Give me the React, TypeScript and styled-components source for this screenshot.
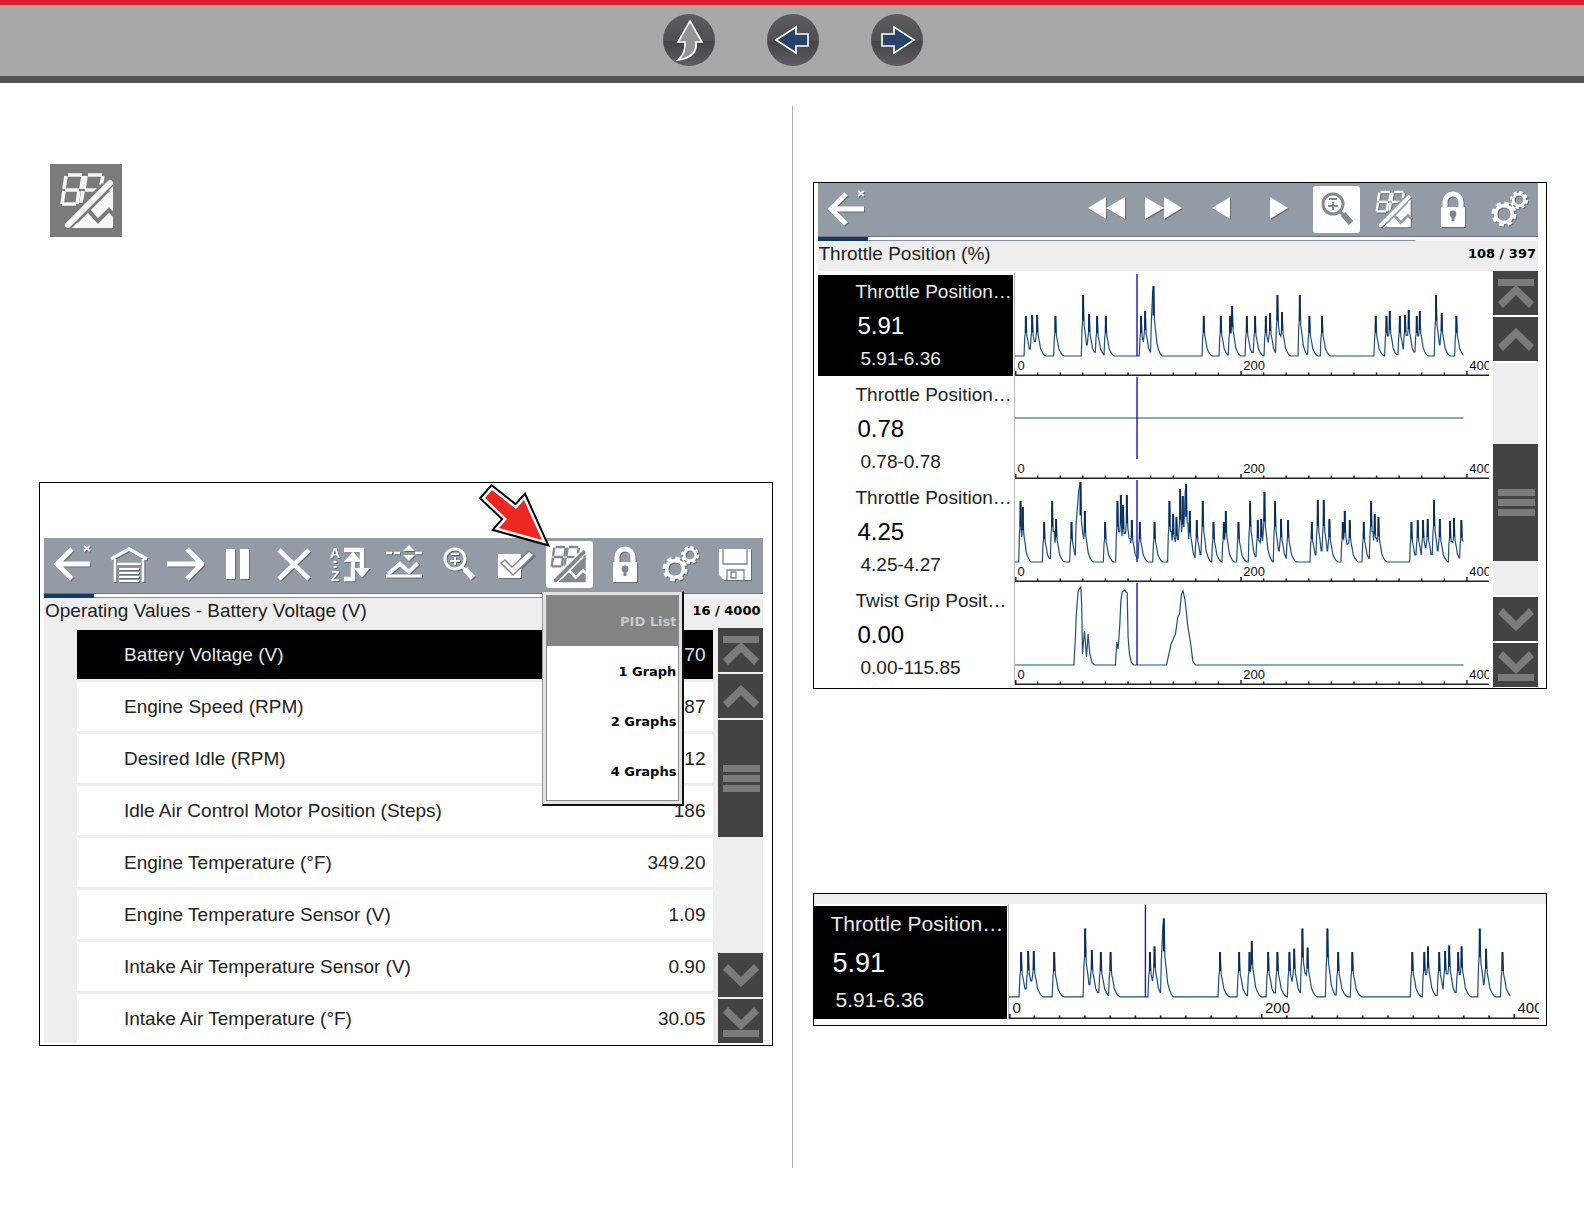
import React from "react";
import styled, { createGlobalStyle, css } from "styled-components";

const GlobalStyle = createGlobalStyle`
  *, *::before, *::after { box-sizing: border-box; }
  body {
    margin: 0;
    background: #fff;
    color: #1c1c1c;
    font-family: "Liberation Sans", Arial, sans-serif;
    font-size: 19px;
  }
  button { font: inherit; color: inherit; border: 0; padding: 0; background: none; cursor: pointer; }
`;

/* ---------- page header ---------- */

const Header = styled.header`
  display: flex;
  justify-content: center;
  align-items: center;
  gap: 52px;
  height: 83px;
  padding: 0 0 1px 1px;
  background: #a8a8a8;
  border-top: 5px solid #d91e2e;
  border-bottom: 7px solid #545454;
`;

const RoundButton = styled.button`
  width: 52px;
  height: 52px;
  border-radius: 50%;
  background: linear-gradient(#5c5c5e, #505052 52%, #434345 52%, #5e5e60);

  svg { display: block; }
`;

function HeaderArrow({ d, fill }: { d: string; fill: string }) {
  return (
    <svg width="52" height="52" viewBox="0 0 52 52" aria-hidden="true">
      <path d={d} fill={fill} stroke="#fff" strokeWidth="1.6" />
    </svg>
  );
}

/* ---------- page columns ---------- */

const Columns = styled.main`
  display: grid;
  grid-template-columns: minmax(0, 1fr) 1px minmax(0, 1fr);
  min-height: 1062px;
  margin: 23px 0 56px;
`;

const LeftColumn = styled.section`
  padding: 58px 19px 0 39px;
`;

const RightColumn = styled.section`
  display: flex;
  flex-direction: column;
  gap: 204px;
  padding: 76px 37px 0 20px;
`;

const Divider = styled.div`
  background: #ababab;
`;

const IconTile = styled.div`
  width: 72px;
  height: 73px;
  margin: 0 0 245px 11px;
  background: #7b7b7b;
  color: #f6f6f6;
`;

const Figure = styled.figure<{ $pad: string }>`
  margin: 0;
  padding: ${(p) => p.$pad};
  border: 1px solid #000;
`;

/* ---------- device screen ---------- */

const Toolbar = styled.div<{ $compact?: boolean }>`
  display: flex;
  align-items: center;
  height: ${(p) => (p.$compact ? 53 : 55)}px;
  padding-bottom: ${(p) => (p.$compact ? 0 : 2)}px;
  background: #929ba6;
`;

const cellWidth = {
  even: css`flex: 1 1 0;`,
  eighth: css`flex: 0 0 8%;`,
};

const ToolCell = styled.div<{ $size: keyof typeof cellWidth; $pushed?: boolean }>`
  ${(p) => cellWidth[p.$size]}
  position: relative;
  display: flex;
  justify-content: center;
  margin-left: ${(p) => (p.$pushed ? "auto" : "0")};
`;

const ToolButton = styled.button<{ $active?: boolean }>`
  display: grid;
  place-items: center;
  width: 47px;
  height: 47px;
  border-radius: 3px;
  background: ${(p) => (p.$active ? "#fff" : "transparent")};
  color: ${(p) => (p.$active ? "#85888c" : "#fff")};

  svg { filter: ${(p) => (p.$active ? "none" : "drop-shadow(1px 1px 0 rgba(70, 75, 85, 0.6))")}; }
`;

const Progress = styled.div`
  display: flex;
  height: 5px;
  border-top: 1px solid #6d7480;
  background: linear-gradient(#fff 75%, #8b8fa0 75%) no-repeat left / 83% 100%, #f6f6f6;

  &::before {
    content: "";
    width: 7%;
    background: #123a63;
  }
`;

const TitleBar = styled.div`
  display: flex;
  justify-content: space-between;
  align-items: flex-start;
  height: 30px;
  padding: 1px 2px 0 1px;
  background: #eee;
  line-height: 24px;
`;

const Title = styled.h2`
  margin: 0;
  font-size: 19px;
  font-weight: 400;
`;

const Counter = styled.span`
  font-family: "DejaVu Sans", Verdana, sans-serif;
  font-size: 13px;
  font-weight: 700;
  color: #000;
`;

const Body = styled.div<{ $bg: string }>`
  display: flex;
  background: ${(p) => p.$bg};
`;

/* ---------- parameter table ---------- */

const ParamTable = styled.table`
  flex: 1;
  margin: 2px 5px 0 33px;
  border-collapse: separate;
  border-spacing: 0;
`;

const ParamRow = styled.tr<{ $selected?: boolean }>`
  height: 52px;
  color: ${(p) => (p.$selected ? "#e8e8e8" : "#222")};

  th, td {
    background: ${(p) => (p.$selected ? "#000" : "#fff")};
    border-bottom: 3px solid #efefef;
  }

  th { padding: 0 0 0 47px; text-align: left; font-weight: 400; }
  td { padding: 0 7px 0 0; text-align: right; }

  &:last-child { height: 49px; }
  &:last-child th, &:last-child td { border-bottom: 0; }
`;

/* ---------- scroll bar ---------- */

const ScrollBar = styled.div`
  display: flex;
  flex-direction: column;
  gap: 2px;
  width: 45px;
`;

const ScrollButton = styled.button`
  height: 44px;
  background: #434343;

  svg { display: block; }
`;

const Track = styled.div`
  flex: 1;
  display: flex;
  flex-direction: column;
  background: #eee;
`;

const TrackSpace = styled.div<{ $grow: number }>`
  flex: ${(p) => p.$grow} 1 0;
`;

const Thumb = styled.div`
  display: flex;
  flex-direction: column;
  justify-content: center;
  align-items: center;
  gap: 3px;
  height: 117px;
  padding-left: 2px;
  background: #434343;

  i { width: 37px; height: 7px; background: #7b7b7b; }
`;

const scrollShapes = {
  "First row": "M5 8h36v7H5zM23 14L41 31l-5 6-13-13-13 13-5-6z",
  "Row up": "M23 11L41 28l-5 6-13-13-13 13-5-6z",
  "Row down": "M23 34L5 17l5-6 13 13 13-13 5 6z",
  "Last row": "M23 31L5 14l5-6 13 13 13-13 5 6zM5 31h36v7H5z",
};

function ScrollStep({ name }: { name: keyof typeof scrollShapes }) {
  return (
    <ScrollButton aria-label={name}>
      <svg width="45" height="44" viewBox="0 0 45 44" aria-hidden="true">
        <path d={scrollShapes[name]} fill="#7b7b7b" />
      </svg>
    </ScrollButton>
  );
}

function Scroller({ before, after }: { before: number; after: number }) {
  return (
    <ScrollBar>
      <ScrollStep name="First row" />
      <ScrollStep name="Row up" />
      <Track>
        <TrackSpace $grow={before} />
        <Thumb><i /><i /><i /></Thumb>
        <TrackSpace $grow={after} />
      </Track>
      <ScrollStep name="Row down" />
      <ScrollStep name="Last row" />
    </ScrollBar>
  );
}

/* ---------- view menu and pointer ---------- */

const Menu = styled.div`
  position: absolute;
  top: 50px;
  left: 1px;
  z-index: 2;
  width: 142px;
  padding: 3px;
  background: #e2e2e2;
  border: 1px solid #9a9a9a;
  border-right: 2px solid #111;
  border-bottom: 2px solid #111;
`;

const MenuList = styled.div`
  padding-bottom: 4px;
  background: #fff;
  border: 1px solid #8a8a8a;
`;

const MenuItem = styled.button<{ $selected?: boolean }>`
  display: block;
  width: 100%;
  height: 50px;
  padding-right: 2px;
  text-align: right;
  font-family: "DejaVu Sans", Verdana, sans-serif;
  font-size: 13px;
  font-weight: 700;
  background: ${(p) => (p.$selected ? "#848484" : "#fff")};
  color: ${(p) => (p.$selected ? "#c9c9c9" : "#000")};
`;

const Pointer = styled.svg`
  position: absolute;
  top: -59px;
  left: -64px;
  z-index: 3;
  overflow: visible;
  pointer-events: none;
`;

const POINTER = "15,8 39,27 47,18 65,58 22,46 30,37 8,16";

/* ---------- icons, all on a 44px square ---------- */

function Icon({ children, box = "0 0 44 44", size = 44 }: { children: React.ReactNode; box?: string; size?: number }) {
  return (
    <svg width={size} height={size} viewBox={box} fill="none" stroke="currentColor" aria-hidden="true">
      {children}
    </svg>
  );
}

const BackIcon = () => (
  <Icon>
    <path d="M22 6L7 21l15 15M8 21h32" strokeWidth="5" />
    <path d="M34 3l6 5M40 3l-6 5" strokeWidth="1.8" />
  </Icon>
);

const GarageIcon = () => (
  <Icon>
    <path d="M6 16L24 6l18 10" strokeWidth="3.6" />
    <path d="M10 16v23M38 16v23M12 21h24" strokeWidth="2.6" />
    <path d="M14 26h20M14 30h20M14 34h20M14 38h20" strokeWidth="2" />
  </Icon>
);

const ForwardIcon = () => (
  <Icon><path d="M27 6l15 15-15 15M7 21h34" strokeWidth="5" /></Icon>
);

const PauseIcon = () => (
  <Icon><path d="M11 6h9v30h-9zM25 6h9v30h-9z" fill="currentColor" stroke="none" /></Icon>
);

const CloseIcon = () => (
  <Icon><path d="M8 7l30 29M38 7L8 36" strokeWidth="4.6" /></Icon>
);

const SortIcon = () => (
  <Icon>
    <text x="4" y="15" fill="currentColor" stroke="none" fontFamily="Liberation Sans, Arial, sans-serif" fontWeight="700" fontSize="14">A</text>
    <text x="5" y="38" fill="currentColor" stroke="none" fontFamily="Liberation Sans, Arial, sans-serif" fontWeight="700" fontSize="14">Z</text>
    <path d="M9 18v2M9 23v2" strokeWidth="3" />
    <path d="M18 7h18v21M18 36h9V16" strokeWidth="4.4" />
    <path d="M30 26l6 7 6-7zM20 18l7-8 7 8z" fill="currentColor" strokeWidth="2" />
  </Icon>
);

const TriggerIcon = () => (
  <Icon>
    <path d="M5 10h6M13 10h6M34 10h7" strokeWidth="2.4" />
    <path d="M22 8h12l-6-6zM22 12h12l-6 6z" fill="currentColor" stroke="none" />
    <path d="M7 31l12-10 9 8 9-9" strokeWidth="4" />
    <path d="M5 33h36" strokeWidth="3" />
  </Icon>
);

const ZoomIcon = () => (
  <Icon>
    <circle cx="19" cy="16" r="10" strokeWidth="3" />
    <path d="M26 24l4 3" strokeWidth="3" />
    <path d="M29 26l8 9" strokeWidth="6" />
    <path d="M15 11h8M14 18h10M19 14v8" strokeWidth="2" />
  </Icon>
);

const CheckIcon = () => (
  <Icon>
    <path d="M6 11h23v24H6z" fill="currentColor" stroke="none" />
    <path d="M9 20l4-3 7 7L37 8l5 4-21 20z" fill="currentColor" stroke="#7d8590" strokeWidth="1.4" />
  </Icon>
);

function ViewIcon({ gap, box = "5 5 66 66", size = 44 }: { gap: string; box?: string; size?: number }) {
  return (
    <Icon box={box} size={size}>
      <path d="M18 11h14M16 12l-2 13M33 12l-2 13M15 26h14M14 27l-2 13M29 27l-2 13M12 40h14" strokeWidth="3.6" />
      <path d="M38 11h14M36 12l-2 13M53 12l-2 9M35 26h12M33 27l-2 12" strokeWidth="3.6" />
      <path d="M63 22v42H22z" fill="currentColor" stroke="none" />
      <path d="M37 45l11 12 11-11 5 5" stroke={gap} strokeWidth="4" />
      <path d="M24 55l32-32" stroke={gap} strokeWidth="11" />
      <path d="M18 61l42-42" strokeWidth="6" strokeLinecap="round" />
    </Icon>
  );
}

const LockIcon = () => (
  <Icon>
    <path d="M15 20v-6a8 8 0 0 1 16 0v6" strokeWidth="5" />
    <path d="M11 19h24v20H11z" fill="currentColor" stroke="none" />
    <circle cx="23" cy="26" r="3.4" fill="#7d8590" stroke="none" />
    <path d="M23 27v6" stroke="#7d8590" strokeWidth="3" />
  </Icon>
);

const GearsIcon = () => (
  <Icon>
    <circle cx="17" cy="26" r="8.4" strokeWidth="3.6" />
    <circle cx="17" cy="26" r="11" strokeWidth="3" strokeDasharray="4.9 3.74" />
    <circle cx="32" cy="12" r="5.8" strokeWidth="2.8" />
    <circle cx="32" cy="12" r="7.8" strokeWidth="2.4" strokeDasharray="3.6 2.53" />
  </Icon>
);

const SaveIcon = () => (
  <Icon>
    <path d="M6 6h32v31H11l-5-5z" fill="currentColor" stroke="none" />
    <path d="M10 6v15h24V6M14 37V27h17v10M18 29h5v6h-5z" stroke="#7d8590" strokeWidth="1.3" />
  </Icon>
);

const Triangles = ({ d }: { d: string }) => (
  <Icon><path d={d} fill="currentColor" stroke="none" /></Icon>
);

/* ---------- waveform data ---------- */

/* [position, height, width of the crest] */
type Spike = [number, number, number?];

const throttle: Spike[] = [
  [9.6, 40], [15.2, 41], [19.6, 41], [35.8, 40], [60.3, 61], [65.6, 42], [72.7, 40], [80.4, 40],
  [111.6, 40], [115.2, 45], [122.6, 70, 2], [167.1, 40], [182.2, 40], [190.4, 40], [192.2, 50],
  [205.2, 40], [212.5, 40], [222, 40], [225.8, 43], [232.3, 61], [236.4, 44], [252.1, 61],
  [260.6, 40], [271.8, 40], [319.3, 40], [328.8, 40], [331.7, 45], [340.6, 40], [345.3, 41],
  [348.5, 46], [355.6, 40], [358.3, 45], [372.7, 61], [377.7, 43], [390.7, 40],
];

const busyThrottle: Spike[] = [
  [4.9, 61], [6.9, 55], [25.8, 40], [32.9, 61], [36.4, 43], [50, 40], [58, 80, 4], [61.8, 51],
  [79.8, 40], [90.7, 61], [93.7, 67], [95.7, 57], [99, 67], [103.4, 42], [110.5, 40], [123.5, 40],
  [136.7, 61], [140, 48], [142.9, 45], [146.2, 73], [148.5, 66], [151.5, 78, 2], [154.7, 51],
  [160.9, 42], [166.2, 61], [175.7, 40], [184.8, 40], [186.6, 51], [197.8, 40], [208.1, 61],
  [214.9, 42], [218, 43], [220.8, 70], [230.2, 61], [235.5, 43], [241.7, 42], [262.7, 40],
  [268, 62], [273.3, 62], [278.3, 43], [290.1, 40], [291.9, 51], [296.3, 42], [308.7, 40],
  [315.2, 61], [318.4, 48], [321.7, 45], [350.9, 40], [356.5, 42], [361.2, 42], [365.3, 43],
  [370.9, 62], [376, 43], [385.1, 41], [388.6, 44], [395.1, 42],
];

const twistGrip: [number, number][] = [
  [0, 0], [52.1, 0], [53.5, 28], [54.1, 48], [55.9, 74], [58.3, 78], [59.1, 58], [59.7, 11], [61.5, 34],
  [63.3, 8], [64.7, 31], [66.2, 11], [68.3, 2], [70.7, 0], [88.9, 0], [90.1, 23], [91.3, 16], [92.8, 41],
  [93.7, 64], [94.8, 73], [96.9, 75], [99.3, 72], [100.1, 28], [101.3, 11], [103.1, 2], [105.2, 0],
  [134.1, 0], [138.2, 21], [142, 31], [144.1, 48], [145.6, 51], [147.4, 71], [148.8, 74], [150.6, 64],
  [153, 38], [155.3, 23], [157.4, 4], [159.7, 0], [397, 0],
];

const BASE = 83;
const END = 397;
const DECAY: [number, number][] = [[0.9, 0.5], [2, 0.35], [3, 0.18], [4.5, 0.09], [6, 0.03], [7.5, 0]];

function spikeTrace(spikes: Spike[]): [number, number][] {
  const out: [number, number][] = [[0, 0], [spikes[0][0] - 1.6, 0]];
  spikes.forEach(([u, h, w = 1], i) => {
    out.push([u - w, h * 0.45], [u - w * 0.4, h * (w > 1 ? 0.9 : 0.6)], [u, h]);
    const next = spikes[i + 1];
    const limit = next ? Math.max(u + 0.4, next[0] - (next[2] ?? 1) - 0.6) : END;
    let level = h * 0.6;
    for (const [d, k] of DECAY) {
      if (u + d > limit) break;
      level = h * k;
      out.push([u + d, level]);
    }
    out.push([limit, level]);
  });
  return out;
}

const toPoints = (trace: [number, number][]) =>
  trace.map(([u, h]) => `${u.toFixed(1)},${(BASE - h).toFixed(1)}`).join(" ");

/* ---------- chart ---------- */

const ChartBox = styled.div`
  flex: 1;
  min-width: 0;
  display: flex;
  flex-direction: column;
  border-left: 1px solid #b5b5b5;
`;

const Plot = styled.svg<{ $h: number }>`
  display: block;
  width: 100%;
  height: ${(p) => p.$h}px;

  * { vector-effect: non-scaling-stroke; fill: none; }
`;

const Ticks = styled.svg`
  display: block;
  width: 100%;
  height: 5px;
`;

const AxisLabels = styled.div<{ $large?: boolean }>`
  display: flex;
  height: ${(p) => (p.$large ? 16 : 14)}px;
  line-height: ${(p) => (p.$large ? 20 : 18)}px;
  font-size: ${(p) => (p.$large ? 15 : 13)}px;
  color: #111;

  span { flex: 0 0 47.6%; padding-left: ${(p) => (p.$large ? 4 : 3)}px; }
  span:last-child { flex: 1 1 0; min-width: 0; overflow: hidden; }
`;

interface ChartProps {
  trace: [number, number][];
  crests?: Spike[];
  large?: boolean;
}

function Chart({ trace, crests = [], large }: ChartProps) {
  const marks = Array.from({ length: 21 }, (_, i) => i * 20);
  return (
    <ChartBox>
      <Plot $h={large ? 94 : 84} viewBox="0 0 420 84" preserveAspectRatio="none" role="img" aria-label="Waveform">
        <polyline points={toPoints(trace)} stroke="#1f4e7c" strokeWidth="1.2" />
        <path
          d={crests.map(([u, h]) => `M${u} ${BASE - h}v${h * 0.42}`).join("")}
          stroke="#0a2d58"
          strokeWidth="2"
        />
        <path d={`M108 1V${BASE}`} stroke="#2415a6" strokeWidth="1.4" />
      </Plot>
      <AxisLabels $large={large}>
        <span>0</span>
        <span>200</span>
        <span>400</span>
      </AxisLabels>
      <Ticks viewBox="0 0 420 5" preserveAspectRatio="none" aria-hidden="true">
        <path d="M0 3.4h420V5H0z" fill="#222" />
        {marks.map((u) => (
          <rect key={u} x={Math.max(0, u - 0.6)} y={u % 200 === 0 ? 0 : 1.5} width="1.3" height="4" fill="#222" />
        ))}
      </Ticks>
    </ChartBox>
  );
}

/* ---------- graph rows ---------- */

const Graphs = styled.div`
  flex: 1;
  min-width: 0;
  padding: 2px 4px 2px 0;
`;

const GraphRow = styled.article<{ $large?: boolean }>`
  display: flex;
  gap: 1px;
  height: ${(p) => (p.$large ? 115 : 103)}px;
`;

const Reading = styled.div<{ $selected?: boolean; $large?: boolean }>`
  flex: 0 0 ${(p) => (p.$large ? 193 : 195)}px;
  margin-top: 2px;
  padding: 4px 0 0 ${(p) => (p.$large ? 17 : 38)}px;
  white-space: nowrap;
  font-size: ${(p) => (p.$large ? 21 : 19)}px;
  background: ${(p) => (p.$selected ? "#000" : "transparent")};
  color: ${(p) => (p.$selected ? "#ececec" : "#222")};
`;

const Name = styled.h3<{ $large?: boolean }>`
  margin: 0;
  font-size: inherit;
  font-weight: 400;
  line-height: ${(p) => (p.$large ? 28 : 26)}px;
`;

const Value = styled.div<{ $large?: boolean; $selected?: boolean }>`
  padding-left: 2px;
  font-size: ${(p) => (p.$large ? 27 : 24)}px;
  line-height: ${(p) => (p.$large ? 50 : 42)}px;
  color: ${(p) => (p.$selected ? "#fff" : "#000")};
`;

const Range = styled.div`
  padding-left: 5px;
  line-height: 24px;
`;

interface GraphProps extends ChartProps {
  name: string;
  value: string;
  range: string;
  selected?: boolean;
}

function Graph({ name, value, range, selected, large, ...chart }: GraphProps) {
  return (
    <GraphRow $large={large}>
      <Reading $selected={selected} $large={large}>
        <Name $large={large}>{name}</Name>
        <Value $large={large} $selected={selected}>{value}</Value>
        <Range>{range}</Range>
      </Reading>
      <Chart large={large} {...chart} />
    </GraphRow>
  );
}

const Band = styled.div`
  height: 10px;
  background: #eee;
`;

const LargeGraph = styled.div`
  padding: 0 7px 6px 0;
`;

/* ---------- content ---------- */

const params: [string, string][] = [
  ["Battery Voltage (V)", "70"],
  ["Engine Speed (RPM)", "87"],
  ["Desired Idle (RPM)", "12"],
  ["Idle Air Control Motor Position (Steps)", "186"],
  ["Engine Temperature (°F)", "349.20"],
  ["Engine Temperature Sensor (V)", "1.09"],
  ["Intake Air Temperature Sensor (V)", "0.90"],
  ["Intake Air Temperature (°F)", "30.05"],
];

const listTools: [string, React.ReactNode][] = [
  ["Back", <BackIcon />],
  ["Home", <GarageIcon />],
  ["Forward", <ForwardIcon />],
  ["Pause", <PauseIcon />],
  ["Clear", <CloseIcon />],
  ["Sort", <SortIcon />],
  ["Trigger", <TriggerIcon />],
  ["Zoom", <ZoomIcon />],
  ["Custom list", <CheckIcon />],
  ["Change view", <ViewIcon gap="#fff" />],
  ["Lock", <LockIcon />],
  ["Tools", <GearsIcon />],
  ["Save", <SaveIcon />],
];

const graphTools: [string, React.ReactNode][] = [
  ["Back", <BackIcon />],
  ["Rewind", <Triangles d="M4 20L22 9v22zM22 20L41 9v22z" />],
  ["Fast forward", <Triangles d="M41 20L23 9v22zM23 20L4 9v22z" />],
  ["Step back", <Triangles d="M13 20L31 9v22z" />],
  ["Step forward", <Triangles d="M31 20L13 9v22z" />],
  ["Zoom", <ZoomIcon />],
  ["Change view", <ViewIcon gap="#929ba6" />],
  ["Lock", <LockIcon />],
  ["Tools", <GearsIcon />],
];

const views = ["PID List", "1 Graph", "2 Graphs", "4 Graphs"];

const throttleTrace = spikeTrace(throttle);

export default function App() {
  return (
    <>
      <GlobalStyle />
      <Header>
        <RoundButton aria-label="Up">
          <HeaderArrow fill="#949494" d="M27 7L39 28H33Q35 43 15 46Q23 39 22 28H15z" />
        </RoundButton>
        <RoundButton aria-label="Previous page">
          <HeaderArrow fill="#27426b" d="M9 26L29 13V20H41V32H29V39z" />
        </RoundButton>
        <RoundButton aria-label="Next page">
          <HeaderArrow fill="#27426b" d="M43 26L23 13V20H11V32H23V39z" />
        </RoundButton>
      </Header>

      <Columns>
        <LeftColumn>
          <IconTile>
            <ViewIcon gap="#7b7b7b" box="0 0 72 72" size={72} />
          </IconTile>

          <Figure $pad="55px 9px 2px 4px">
            <Toolbar>
              {listTools.map(([name, icon]) => (
                <ToolCell key={name} $size="even">
                  <ToolButton aria-label={name} $active={name === "Change view"}>{icon}</ToolButton>
                  {name === "Change view" && (
                    <>
                      <Pointer width="76" height="72" viewBox="0 0 76 72" aria-hidden="true">
                        <polygon points={POINTER} fill="#000" stroke="#000" strokeWidth="9" strokeMiterlimit="6" />
                        <polygon points={POINTER} fill="#ee2722" stroke="#fff" strokeWidth="5" strokeMiterlimit="6" />
                        <polygon points={POINTER} fill="#ee2722" />
                      </Pointer>
                      <Menu role="menu">
                        <MenuList>
                          {views.map((v, i) => (
                            <MenuItem key={v} role="menuitem" $selected={i === 0}>{v}</MenuItem>
                          ))}
                        </MenuList>
                      </Menu>
                    </>
                  )}
                </ToolCell>
              ))}
            </Toolbar>
            <Progress />
            <TitleBar>
              <Title>Operating Values - Battery Voltage (V)</Title>
              <Counter>16 / 4000</Counter>
            </TitleBar>
            <Body $bg="#eee">
              <ParamTable>
                <tbody>
                  {params.map(([name, value], i) => (
                    <ParamRow key={name} $selected={i === 0}>
                      <th scope="row">{name}</th>
                      <td>{value}</td>
                    </ParamRow>
                  ))}
                </tbody>
              </ParamTable>
              <Scroller before={0} after={1} />
            </Body>
          </Figure>
        </LeftColumn>

        <Divider />

        <RightColumn>
          <Figure $pad="0 8px 1px 4px">
            <Toolbar $compact>
              {graphTools.map(([name, icon], i) => (
                <ToolCell key={name} $size="eighth" $pushed={i === 1}>
                  <ToolButton aria-label={name} $active={name === "Zoom"}>{icon}</ToolButton>
                </ToolCell>
              ))}
            </Toolbar>
            <Progress />
            <TitleBar>
              <Title>Throttle Position (%)</Title>
              <Counter>108 / 397</Counter>
            </TitleBar>
            <Body $bg="#fff">
              <Graphs>
                <Graph name="Throttle Position…" value="5.91" range="5.91-6.36" selected trace={throttleTrace} crests={throttle} />
                <Graph name="Throttle Position…" value="0.78" range="0.78-0.78" trace={[[0, 41], [END, 41]]} />
                <Graph name="Throttle Position…" value="4.25" range="4.25-4.27" trace={spikeTrace(busyThrottle)} crests={busyThrottle} />
                <Graph name="Twist Grip Posit…" value="0.00" range="0.00-115.85" trace={twistGrip} />
              </Graphs>
              <Scroller before={82} after={35} />
            </Body>
          </Figure>

          <Figure $pad="0">
            <Band />
            <LargeGraph>
              <Graph large name="Throttle Position…" value="5.91" range="5.91-6.36" selected trace={throttleTrace} crests={throttle} />
            </LargeGraph>
          </Figure>
        </RightColumn>
      </Columns>
    </>
  );
}
